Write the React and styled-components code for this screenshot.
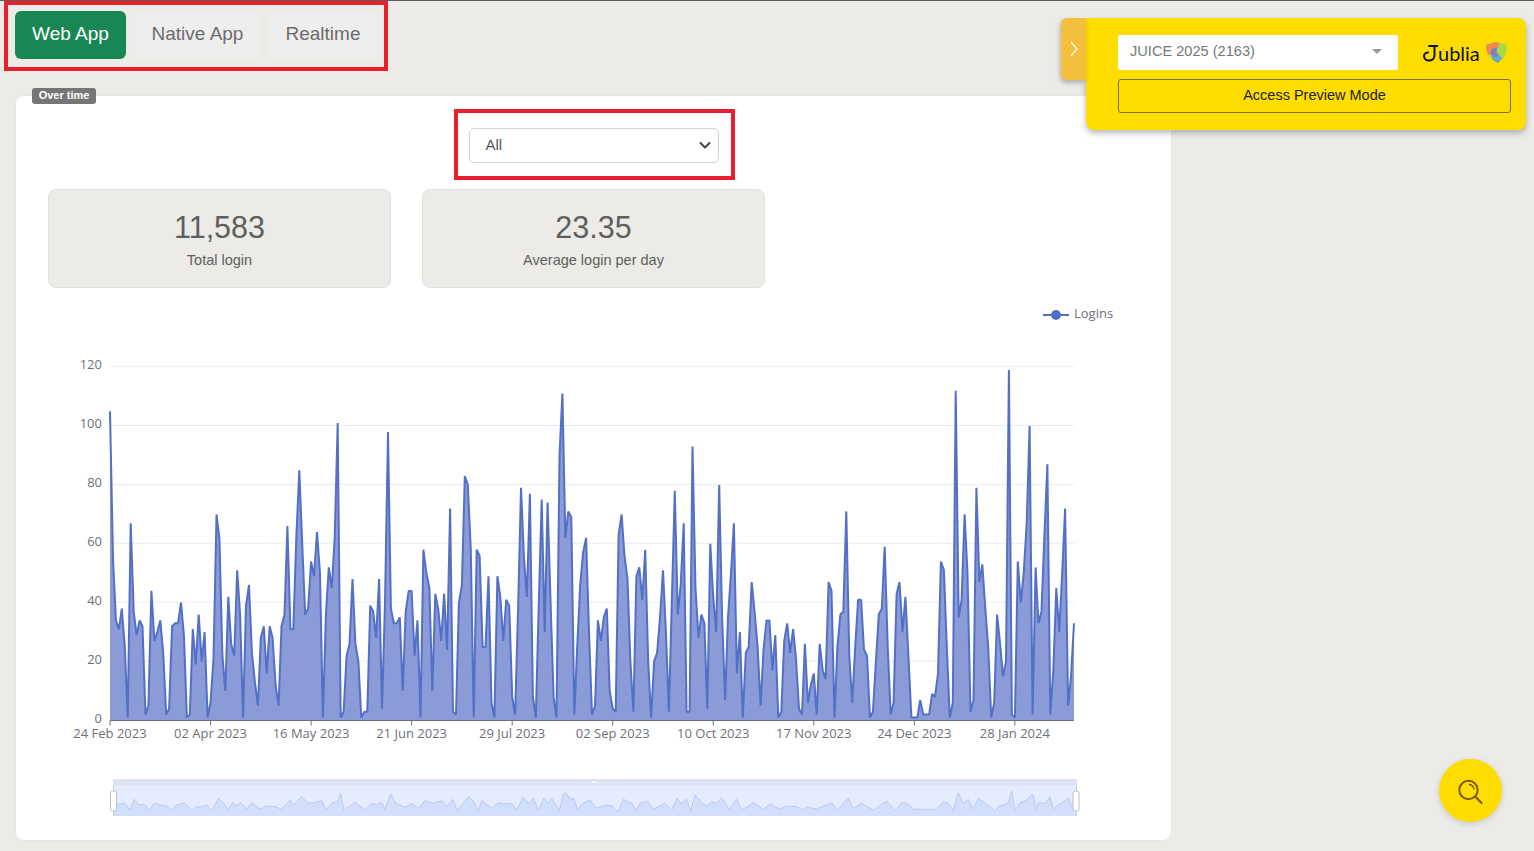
import React from "react";
import styled, { createGlobalStyle } from "styled-components";

const Global = createGlobalStyle`
  html, body { margin: 0; padding: 0; background: #ecebe7; }
  body { height: 851px; overflow: hidden; font-family: "Liberation Sans", Arial, sans-serif; }
`;

const Page = styled.div`
  position: relative;
  width: 1534px;
  height: 851px;
  box-sizing: border-box;
  border-top: 1px solid #5c5c5c;
  overflow: hidden;
`;
const TabBar = styled.nav`
  display: flex;
  gap: 9px;
  padding: 10px 0 0 15px;
  height: 85px;
  box-sizing: border-box;
`;
const Tab = styled.button`
  height: 48px;
  width: ${(p) => p.$w}px;
  border: 0;
  border-radius: 6px;
  padding: 0 0 3px;
  font: 19px "Liberation Sans", Arial, sans-serif;
  background: ${(p) => (p.$active ? "#198754" : "#eeeeee")};
  color: ${(p) => (p.$active ? "#fff" : "#6c6c6c")};
`;
const Card = styled.section`
  position: relative;
  box-sizing: border-box;
  margin: 10px 0 0 16px;
  width: 1155px;
  height: 744px;
  background: #fff;
  border-radius: 8px;
  box-shadow: 0 0 2px rgba(0, 0, 0, 0.08);
  padding-top: 32px;
`;
const Badge = styled.span`
  position: absolute;
  left: 16px;
  top: -8px;
  height: 16px;
  width: 64px;
  padding-bottom: 2px;
  box-sizing: border-box;
  display: flex;
  align-items: center;
  justify-content: center;
  background: #767676;
  color: #fff;
  font-size: 11px;
  font-weight: 700;
  border-radius: 3px;
`;
const FilterRow = styled.div`
  display: flex;
  justify-content: center;
  margin-bottom: 26px;
`;
const Filter = styled.div`
  box-sizing: border-box;
  width: 250px;
  height: 35px;
  display: flex;
  align-items: center;
  justify-content: space-between;
  padding: 0 7px 2px 16px;
  border: 1px solid #ced4da;
  border-radius: 5px;
  font-size: 15px;
  color: #555;
`;
const Stats = styled.div`
  display: grid;
  grid-template-columns: repeat(2, 343px);
  gap: 31px;
  padding-left: 32px;
`;
const Stat = styled.div`
  box-sizing: border-box;
  height: 99px;
  background: #ecebe7;
  border: 1px solid #e2e1dd;
  border-radius: 8px;
  display: flex;
  flex-direction: column;
  align-items: center;
  padding-top: 19px;
  color: #5e5e5e;
`;
const StatValue = styled.div`
  font-size: 30.5px;
  line-height: 36px;
`;
const StatLabel = styled.div`
  font-size: 14.5px;
  line-height: 20px;
  margin-top: 5px;
`;
const ChartSvg = styled.svg`
  display: block;
  margin-top: 12px;
  text {
    font-family: "Open Sans", sans-serif;
    font-size: 13px;
    fill: #6e7079;
  }
`;
const Panel = styled.aside`
  position: absolute;
  left: 1086px;
  top: 17px;
  width: 440px;
  height: 112px;
  box-sizing: border-box;
  padding: 17px 15px 0 32px;
  background: #ffdd00;
  border-radius: 0 8px 8px 8px;
  box-shadow: 0 3px 6px rgba(0, 0, 0, 0.28);
`;
const PanelToggle = styled.button`
  position: absolute;
  left: -25px;
  top: 0;
  width: 25px;
  height: 62px;
  padding: 0;
  border: 0;
  border-radius: 6px 0 0 6px;
  background: #f5bf3e;
  box-shadow: -1px 3px 5px rgba(0, 0, 0, 0.25);
  display: flex;
  align-items: center;
  justify-content: center;
`;
const PanelTop = styled.div`
  display: flex;
  align-items: center;
  height: 35px;
  margin-bottom: 9px;
`;
const JuiceSelect = styled.div`
  box-sizing: border-box;
  flex: 0 0 280px;
  height: 35px;
  background: #fff;
  border-radius: 2px;
  display: flex;
  align-items: center;
  justify-content: space-between;
  padding: 0 16px 3px 12px;
  color: #777;
  font-size: 14.6px;
`;
const Caret = styled.span`
  width: 0;
  height: 0;
  border-left: 5px solid transparent;
  border-right: 5px solid transparent;
  border-top: 5px solid #999;
`;
const Logo = styled.div`
  display: flex;
  align-items: center;
  margin-left: 25px;
  height: 35px;
  flex: none;
`;
const LogoText = styled.span`
  font-family: "Lato", sans-serif;
  font-size: 20px;
  line-height: 1;
  color: #111;
  margin: 0 5px 0 0;
`;
const PreviewButton = styled.button`
  display: block;
  box-sizing: border-box;
  width: 393px;
  height: 34px;
  padding: 0 0 2px;
  background: transparent;
  border: 1px solid #7d6f14;
  border-radius: 3px;
  font: 14.5px "Liberation Sans", Arial, sans-serif;
  color: #222;
`;
const Fab = styled.button`
  position: absolute;
  left: 1439px;
  top: 758px;
  width: 63px;
  height: 63px;
  padding: 0;
  border: 0;
  border-radius: 50%;
  background: #ffdd00;
  box-shadow: 0 2px 6px rgba(0, 0, 0, 0.15);
  display: flex;
  align-items: center;
  justify-content: center;
`;
const Mark = styled.div`
  position: absolute;
  left: ${(p) => p.$x}px;
  top: ${(p) => p.$y}px;
  width: ${(p) => p.$w}px;
  height: ${(p) => p.$h}px;
  box-sizing: border-box;
  border: 4px solid #e8202e;
  pointer-events: none;
`;

const DATA = [105,55,34,31,38,25,1,67,37,29,34,32,2,5,44,27,30,34,23,2,4,32,33,33,40,29,1,2,31,19,36,20,30,1,6,21,70,62,22,10,42,26,22,51,36,1,39,46,23,13,5,28,32,16,32,28,12,5,32,36,66,31,31,62,85,60,36,38,54,49,64,50,1,36,52,45,62,101,1,3,22,26,48,26,20,1,3,3,39,37,28,48,4,40,98,38,33,33,35,10,37,44,44,22,34,1,58,50,45,10,43,38,27,43,24,72,3,2,40,46,83,80,58,1,58,56,25,25,49,6,1,49,42,27,41,39,8,2,38,79,55,42,77,8,1,40,75,30,74,40,8,1,90,111,62,71,69,2,25,46,57,62,30,2,5,34,27,35,38,10,4,3,63,70,56,48,20,3,49,52,41,58,20,1,20,23,35,51,30,3,40,78,36,46,67,3,3,93,45,28,36,33,4,60,42,30,80,35,7,35,50,67,16,30,1,23,25,47,37,25,5,24,34,34,17,29,1,3,27,33,23,31,21,4,2,26,6,12,16,2,26,17,14,47,44,1,25,36,37,71,22,6,25,41,41,24,22,1,3,20,36,38,59,25,2,6,43,47,30,42,22,1,1,1,7,2,2,2,9,8,16,54,51,25,1,6,112,35,41,70,50,3,7,79,47,53,38,25,1,6,36,26,15,20,119,2,1,54,40,50,67,100,2,52,33,37,63,87,2,17,45,30,50,72,5,15,33];

const MINI_A = [[70,100],[85,103],[105,100],[120,120],[132,88],[145,103],[165,105],[178,122],[192,100],[215,106],[232,108],[245,122],[258,105],[285,100],[305,122],[320,110],[330,112],[350,105],[365,122],[385,86],[400,98],[415,118],[428,98],[440,108],[452,97],[470,118],[485,98],[510,118],[530,108],[555,110],[575,118],[600,90],[612,105],[635,80],[655,100],[670,98],[695,92],[708,120],[725,100],[745,92],[752,70],[762,122],[795,97],[825,120],[845,100],[860,104],[875,98],[885,118],[902,72],[918,100],[945,112],[965,100],[985,115],[1005,92],[1030,100],[1055,92],[1070,110],[1088,88],[1102,122],[1135,80],[1150,92],[1165,122],[1175,92],[1205,115],[1225,98],[1240,102],[1265,100],[1280,120],[1300,82],[1315,100],[1330,85],[1345,120],[1362,85],[1375,100],[1385,85],[1408,122],[1420,72],[1428,68],[1440,88],[1452,85],[1462,118],[1480,100],[1500,90]];
const MINI_B = [[20,115],[50,105],[65,107],[85,125],[100,88],[125,100],[140,122],[150,98],[175,95],[190,118],[225,100],[245,120],[262,85],[272,100],[290,88],[302,122],[315,75],[335,98],[350,108],[365,95],[380,100],[395,83],[418,118],[440,88],[450,112],[460,118],[490,98],[520,118],[540,102],[570,118],[590,108],[620,110],[640,120],[650,110],[680,118],[700,108],[725,98],[742,120],[775,85],[790,115],[815,100],[850,120],[890,93],[915,122],[935,98],[950,100],[972,118],[1040,118],[1060,95],[1075,100],[1090,122],[1105,68],[1120,100],[1135,88],[1150,118],[1165,85],[1180,95],[1215,122],[1225,110],[1255,100],[1265,62],[1275,122],[1290,98],[1310,90],[1328,72],[1340,118],[1345,98],[1365,100],[1380,80],[1390,118],[1405,105],[1435,85],[1450,120]];

const X0 = 110;
const X1 = 1074;
const Y0 = 720.5;
const UNIT = 2.945;
const STEP = (X1 - X0) / (DATA.length - 1);
const px = (i) => X0 + i * STEP;
const py = (v) => Y0 - v * UNIT;
const LINE = DATA.map((v, i) => `${px(i).toFixed(1)},${py(v).toFixed(1)}`).join(" ");
const AREA = `${X0},${Y0} ${LINE} ${X1},${Y0}`;
const MINI = [
  ...MINI_A.map(([x, y]) => [90 + x / 3, 770 + y / 3]),
  ...MINI_B.map(([x, y]) => [590 + x / 3, 770 + y / 3]),
].map(([x, y]) => `${x.toFixed(1)},${y.toFixed(1)}`).join(" ");

const YTICKS = [0, 20, 40, 60, 80, 100, 120];
const XTICKS = ["24 Feb 2023","02 Apr 2023","16 May 2023","21 Jun 2023","29 Jul 2023","02 Sep 2023","10 Oct 2023","17 Nov 2023","24 Dec 2023","28 Jan 2024"];

function Chart() {
  return (
    <ChartSvg width="1155" height="535" viewBox="16 300 1155 535">
      <line x1="1043" x2="1069" y1="315" y2="315" stroke="#516fc4" strokeWidth="2" />
      <circle cx="1056" cy="315" r="5" fill="#516fc4" />
      <text x="1074" y="318">Logins</text>
      {YTICKS.filter((t) => t > 0).map((t) => (
        <line key={t} x1={X0} x2={X1} y1={py(t) - 0.5} y2={py(t) - 0.5} stroke="#e9ecf6" />
      ))}
      {YTICKS.map((t) => (
        <text key={t} x="102" y={py(t) + 2} textAnchor="end">{t}</text>
      ))}
      <polygon points={AREA} fill="#8a9bd8" />
      <polyline points={LINE} fill="none" stroke="#5470c6" strokeWidth="2" strokeLinejoin="bevel" />
      <line x1={X0} x2={X1} y1={Y0} y2={Y0} stroke="#6e7079" />
      {XTICKS.map((t, i) => {
        const x = px(i * 34);
        return (
          <g key={t}>
            <line x1={x} x2={x} y1={Y0} y2={Y0 + 5} stroke="#6e7079" />
            <text x={x} y="737.5" textAnchor="middle">{t}</text>
          </g>
        );
      })}
      <rect x="113" y="779" width="964" height="37" fill="#e4ecfd" />
      <rect x="113" y="779" width="964" height="6.5" fill="#dde3f3" />
      <polygon points={`113,816 ${MINI} 1077,816`} fill="#d2dffb" />
      <polyline points={MINI} fill="none" stroke="#bccaf0" strokeWidth="1" />
      <line x1="113.5" x2="113.5" y1="785" y2="816" stroke="#c9cfdf" />
      <line x1="1076.5" x2="1076.5" y1="785" y2="816" stroke="#c9cfdf" />
      <rect x="110.5" y="791" width="6" height="20" rx="2" fill="#fff" stroke="#b9c0d6" />
      <rect x="1073" y="791" width="6" height="20" rx="2" fill="#fff" stroke="#b9c0d6" />
      <rect x="592" y="781" width="1" height="2" fill="#fff" />
      <rect x="594" y="781" width="1" height="2" fill="#fff" />
      <rect x="596" y="781" width="1" height="2" fill="#fff" />
    </ChartSvg>
  );
}

export default function App() {
  return (
    <Page>
      <Global />
      <TabBar>
        <Tab $active $w={111}>Web App</Tab>
        <Tab $w={125}>Native App</Tab>
        <Tab $w={108}>Realtime</Tab>
      </TabBar>
      <Card>
        <Badge>Over time</Badge>
        <FilterRow>
          <Filter>
            All
            <svg width="12" height="12" viewBox="0 0 12 12">
              <path d="M1.5 4l4.5 4.5L10.5 4" fill="none" stroke="#444" strokeWidth="2" strokeLinecap="round" strokeLinejoin="round" />
            </svg>
          </Filter>
        </FilterRow>
        <Stats>
          <Stat>
            <StatValue>11,583</StatValue>
            <StatLabel>Total login</StatLabel>
          </Stat>
          <Stat>
            <StatValue>23.35</StatValue>
            <StatLabel>Average login per day</StatLabel>
          </Stat>
        </Stats>
        <Chart />
      </Card>
      <Panel>
        <PanelToggle aria-label="Collapse">
          <svg width="10" height="16" viewBox="0 0 10 16">
            <path d="M2 1l6 7-6 7" fill="none" stroke="#fff" strokeWidth="1.2" />
          </svg>
        </PanelToggle>
        <PanelTop>
          <JuiceSelect>JUICE 2025 (2163)<Caret /></JuiceSelect>
          <Logo>
            <svg width="15" height="18" viewBox="0 0 15 18">
              <path d="M6 2H14.5M11.5 2V11.5C11.5 14.5 9 16.5 6 16.5 3 16.5 1 14.5 1 12 1 10 3 8.5 5 8.5" fill="none" stroke="#111" strokeWidth="2" strokeLinecap="round" />
            </svg>
            <LogoText>ublia</LogoText>
            <svg width="23" height="23" viewBox="0 0 23 23">
              <path d="M1 4L11 1l11 3c0 8-3 14-9 18C6 19 1 12 1 4z" fill="#a6d84a" />
              <path d="M1 4L11 1l3 1-2 9-9 3C2 11 1 8 1 4z" fill="#ef8a4c" />
              <path d="M6 16l7-3 4 4-4 5c-3-2-6-3-7-6z" fill="#6fa8c9" />
              <circle cx="10" cy="11.5" r="4.5" fill="#7d7fc0" />
              <circle cx="15" cy="10" r="3.5" fill="#9ddc4a" />
            </svg>
          </Logo>
        </PanelTop>
        <PreviewButton>Access Preview Mode</PreviewButton>
      </Panel>
      <Fab aria-label="Search">
        <svg width="28" height="28" viewBox="0 0 28 28">
          <circle cx="11.5" cy="13" r="9.2" fill="none" stroke="#7a5a00" strokeWidth="2" />
          <path d="M18.3 19.6L24.5 26" stroke="#7a5a00" strokeWidth="2.2" strokeLinecap="round" />
          <path d="M12.5 7.5a5.5 5.5 0 0 1 4.5 4.5" fill="none" stroke="#7a5a00" strokeWidth="1.4" strokeLinecap="round" />
        </svg>
      </Fab>
      <Mark $x={4} $y={0} $w={384} $h={70} />
      <Mark $x={454} $y={108} $w={281} $h={71} />
    </Page>
  );
}
